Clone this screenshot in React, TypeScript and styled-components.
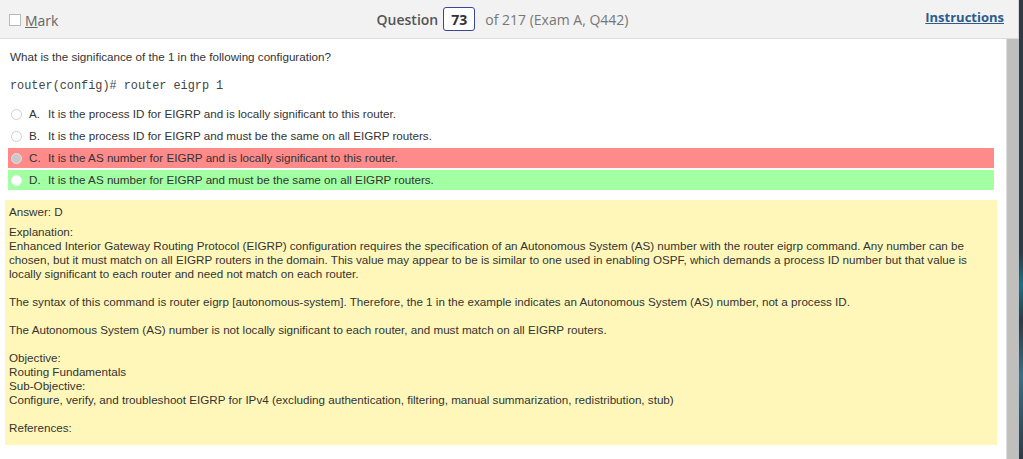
import styled, { createGlobalStyle } from 'styled-components';

const GlobalStyle = createGlobalStyle`
  html, body {
    margin: 0;
    padding: 0;
    background: #ffffff;
    overflow: hidden;
  }
`;

const Frame = styled.div`
  display: flex;
  width: 1023px;
  height: 459px;
  overflow: hidden;
`;

const Window = styled.div`
  width: 1019px;
  display: flex;
  flex-direction: column;
`;

const Edge = styled.div`
  width: 4px;
  background: linear-gradient(180deg, #2f3a42 0%, #2f3a42 55%, #1f6f86 62%, #2f3a42 70%, #3b6f86 82%, #2f3a42 100%);
`;

const Header = styled.header`
  height: 38px;
  background: #f2f2f2;
  border-bottom: 1px solid #dcdcdc;
  border-right: 1px solid #d6d6d6;
  display: grid;
  grid-template-columns: 1fr auto 1fr;
  align-items: center;
  padding: 0 14px 0 9px;
  font-family: 'Open Sans', 'Noto Sans', sans-serif;
  font-size: 14px;
`;

const MarkLabel = styled.label`
  display: flex;
  align-items: center;
  gap: 4px;
  color: #666;
  margin-top: 2px;
`;

const CheckBox = styled.span`
  width: 10px;
  height: 10px;
  border: 1px solid #b9b9b9;
  background: #fff;
`;

const Underlined = styled.span`
  text-decoration: underline;
`;

const QuestionNav = styled.div`
  display: flex;
  align-items: center;
  gap: 5px;
  margin-left: -8px;
`;

const QuestionWord = styled.span`
  font-weight: 600;
  color: #555;
`;

const NumberBox = styled.span`
  width: 30px;
  height: 22px;
  border: 1px solid #3a4796;
  border-radius: 3px;
  background: #fff;
  color: #333;
  font-weight: 700;
  display: flex;
  align-items: center;
  justify-content: center;
  margin-right: 5px;
`;

const OfText = styled.span`
  color: #777;
`;

const InstructionsLink = styled.a`
  justify-self: end;
  color: #2d5b8c;
  font-weight: 700;
  font-size: 13px;
  text-decoration: underline;
  margin-top: -4px;
`;

const BodyRow = styled.div`
  flex: 1;
  display: flex;
`;

const Content = styled.main`
  width: 1008px;
  background: #fff;
  font-family: 'Liberation Sans', Arial, sans-serif;
  font-size: 11.65px;
  line-height: 14px;
  color: #333;
  padding-top: 11px;
`;

const Scrollbar = styled.div`
  width: 11px;
  background: #c0bfbb;
  border-left: 1px solid #dedede;
  border-right: 1px solid #b4c0c8;
`;

const QuestionText = styled.p`
  margin: 0 0 15px 10px;
`;

const Code = styled.pre`
  margin: 0 0 11px 10px;
  font-family: 'Liberation Mono', 'Courier New', monospace;
  font-size: 11.85px;
  line-height: 14px;
  color: #444;
`;

const OptionList = styled.div`
  display: flex;
  flex-direction: column;
  gap: 2px;
  margin: 0 12px 10px 8px;
`;

const OptionRow = styled.div<{ $tone?: 'wrong' | 'right' }>`
  height: 20px;
  display: flex;
  align-items: center;
  background: ${(p) => (p.$tone === 'wrong' ? '#ff8a8a' : p.$tone === 'right' ? '#a2ffa2' : 'transparent')};
`;

const Radio = styled.span<{ $state: 'empty' | 'checked' | 'plain' }>`
  width: 11px;
  height: 11px;
  box-sizing: border-box;
  border-radius: 50%;
  margin: 0 7px 0 3px;
  background: ${(p) => (p.$state === 'checked' ? '#c9c9c9' : '#fff')};
  border: 1px solid ${(p) => (p.$state === 'empty' ? '#cfcfcf' : p.$state === 'checked' ? '#e0e0e0' : '#f4f4f4')};
`;

const Letter = styled.span`
  width: 19px;
`;

const AnswerBox = styled.section`
  margin: 0 9px 0 5px;
  background: #fff7b9;
  padding: 5px 4px 10px;
`;

const AnswerLine = styled.p`
  margin: 0 0 6px;
`;

const Para = styled.p`
  margin: 0 0 14px;

  &:last-child {
    margin-bottom: 0;
  }
`;

const options = [
  { letter: 'A.', text: 'It is the process ID for EIGRP and is locally significant to this router.' },
  { letter: 'B.', text: 'It is the process ID for EIGRP and must be the same on all EIGRP routers.' },
  { letter: 'C.', text: 'It is the AS number for EIGRP and is locally significant to this router.', tone: 'wrong' as const, radio: 'checked' as const },
  { letter: 'D.', text: 'It is the AS number for EIGRP and must be the same on all EIGRP routers.', tone: 'right' as const, radio: 'plain' as const },
];

const App = () => {
  return (
    <>
      <GlobalStyle />
      <Frame>
        <Window>
          <Header>
            <MarkLabel>
              <CheckBox />
              <span>
                <Underlined>M</Underlined>ark
              </span>
            </MarkLabel>
            <QuestionNav>
              <QuestionWord>Question</QuestionWord>
              <NumberBox>73</NumberBox>
              <OfText>of 217 (Exam A, Q442)</OfText>
            </QuestionNav>
            <InstructionsLink>Instructions</InstructionsLink>
          </Header>
          <BodyRow>
            <Content>
              <QuestionText>What is the significance of the 1 in the following configuration?</QuestionText>
              <Code>router(config)# router eigrp 1</Code>
              <OptionList>
                {options.map((o) => (
                  <OptionRow key={o.letter} $tone={o.tone}>
                    <Radio $state={o.radio ?? 'empty'} />
                    <Letter>{o.letter}</Letter>
                    <span>{o.text}</span>
                  </OptionRow>
                ))}
              </OptionList>
              <AnswerBox>
                <AnswerLine>Answer: D</AnswerLine>
                <Para>
                  Explanation:
                  <br />
                  Enhanced Interior Gateway Routing Protocol (EIGRP) configuration requires the specification of an
                  Autonomous System (AS) number with the router eigrp command. Any number can be chosen, but it must
                  match on all EIGRP routers in the domain. This value may appear to be is similar to one used in
                  enabling OSPF, which demands a process ID number but that value is locally significant to each router
                  and need not match on each router.
                </Para>
                <Para>
                  The syntax of this command is router eigrp [autonomous-system]. Therefore, the 1 in the example
                  indicates an Autonomous System (AS) number, not a process ID.
                </Para>
                <Para>The Autonomous System (AS) number is not locally significant to each router, and must match on all EIGRP routers.</Para>
                <Para>
                  Objective:
                  <br />
                  Routing Fundamentals
                  <br />
                  Sub-Objective:
                  <br />
                  Configure, verify, and troubleshoot EIGRP for IPv4 (excluding authentication, filtering, manual
                  summarization, redistribution, stub)
                </Para>
                <Para>References:</Para>
              </AnswerBox>
            </Content>
            <Scrollbar />
          </BodyRow>
        </Window>
        <Edge />
      </Frame>
    </>
  );
};

export default App;
